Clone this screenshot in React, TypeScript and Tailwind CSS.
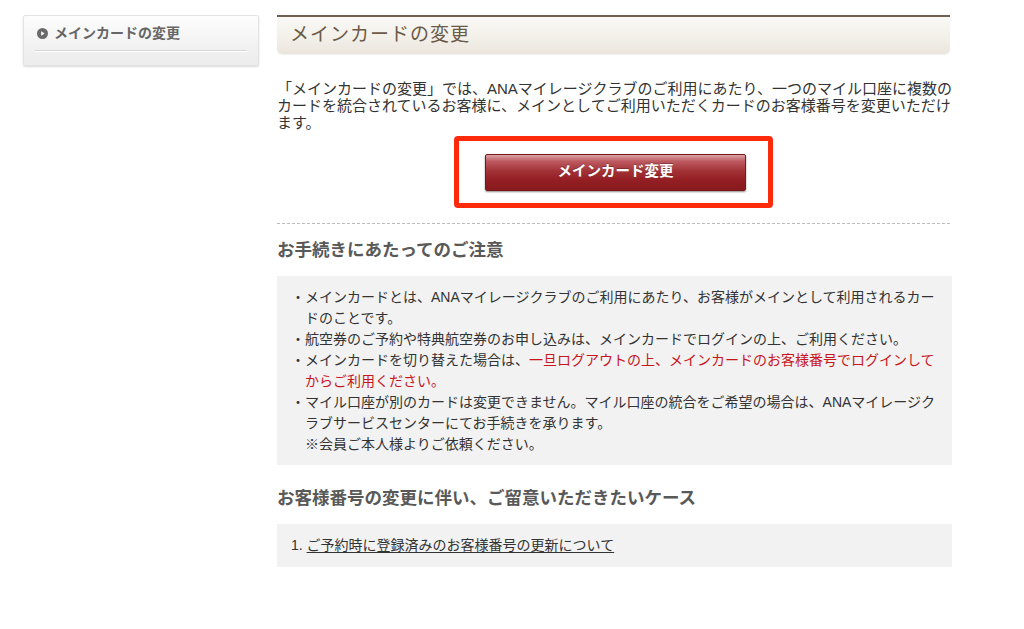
import React from "react";

const sans = { fontFamily: '"Liberation Sans", "Noto Sans CJK JP", sans-serif' };
const serif = { fontFamily: '"Liberation Serif", "Noto Sans CJK JP", serif' };

function Bullet({ children }: { children: React.ReactNode }) {
  return (
    <div className="flex">
      <span className="w-[14px] shrink-0">・</span>
      <div>{children}</div>
    </div>
  );
}

export default function App() {
  return (
    <div className="min-h-[629px] w-[1024px] bg-white text-[#333]" style={sans}>
      <div className="flex pt-[15px]">
        {/* Sidebar */}
        <div className="ml-[23px] w-[236px] shrink-0">
          <div className="h-[51px] rounded-[2px] border border-[#e4e4e4] bg-[linear-gradient(#fdfdfd,#f1f1f1_65%,#ececec)] shadow-[0_1px_2px_rgba(0,0,0,0.15)]">
            <div className="mx-[11px] flex h-[35px] items-center gap-[6px] border-b border-[#d6d6d6] pl-[2px] shadow-[0_1px_0_#fff]">
              <svg width="11" height="11" viewBox="0 0 11 11">
                <circle cx="5.5" cy="5.5" r="5.5" fill="#6a6a6a" />
                <path d="M4.2 3.2 L7.6 5.5 L4.2 7.8 Z" fill="#fff" />
              </svg>
              <span className="text-[14px] font-bold leading-none text-[#666]">メインカードの変更</span>
            </div>
          </div>
        </div>

        {/* Main */}
        <div className="ml-[18px] w-[675px]">
          <div className="w-[673px] overflow-hidden rounded-b-[5px] border-t-2 border-[#6f604f] bg-[linear-gradient(#faf9f5,#f3f0ea_55%,#ebe6dd)] shadow-[0_1px_1px_rgba(0,0,0,0.06)]">
            <div
              className="flex h-[37px] items-center pl-[13px] text-[19px] tracking-[1px] text-[#6b5a47]"
              style={serif}
            >
              メインカードの変更
            </div>
          </div>

          <div className="mt-[26px] w-[680px] text-[15px] leading-[17px] whitespace-nowrap">
            <div>「メインカードの変更」では、ANAマイレージクラブのご利用にあたり、一つのマイル口座に複数の</div>
            <div>カードを統合されているお客様に、メインとしてご利用いただくカードのお客様番号を変更いただけ</div>
            <div>ます。</div>
          </div>

          <div className="mt-[5px] flex w-[673px] justify-center">
            <div className="flex h-[72px] w-[319px] items-center justify-center rounded-[4px] border-[5px] border-[#fd2a0c] pl-[4px]">
              <button className="h-[37px] w-[261px] rounded-[2px] border border-[#7c1717] bg-[linear-gradient(#d9a3a6_0%,#bd5a60_18%,#a33338_45%,#941f24_70%,#861a1d_100%)] text-[14.5px] font-bold text-white shadow-[0_1px_2px_rgba(0,0,0,0.45)] [text-shadow:0_-1px_0_rgba(0,0,0,0.25)]">
                メインカード変更
              </button>
            </div>
          </div>

          <div className="mt-[15px] w-[673px] border-t border-dashed border-[#bdbdbd]" />

          <h2 className="mt-[14px] text-[17.5px] font-bold leading-[24px] text-[#595959]" style={serif}>
            お手続きにあたってのご注意
          </h2>

          <div className="mt-[14px] bg-[#f2f2f2] pt-[11px] pb-[10px] pl-[14px] text-[14px] leading-[21px] whitespace-nowrap">
            <Bullet>
              <div>メインカードとは、ANAマイレージクラブのご利用にあたり、お客様がメインとして利用されるカー</div>
              <div>ドのことです。</div>
            </Bullet>
            <Bullet>
              <div>航空券のご予約や特典航空券のお申し込みは、メインカードでログインの上、ご利用ください。</div>
            </Bullet>
            <Bullet>
              <div>
                メインカードを切り替えた場合は、
                <span className="text-[#c8161d]">一旦ログアウトの上、メインカードのお客様番号でログインして</span>
              </div>
              <div className="text-[#c8161d]">からご利用ください。</div>
            </Bullet>
            <Bullet>
              <div>マイル口座が別のカードは変更できません。マイル口座の統合をご希望の場合は、ANAマイレージク</div>
              <div>ラブサービスセンターにてお手続きを承ります。</div>
              <div>※会員ご本人様よりご依頼ください。</div>
            </Bullet>
          </div>

          <h2 className="mt-[21px] text-[17.5px] font-bold leading-[24px] text-[#595959]" style={serif}>
            お客様番号の変更に伴い、ご留意いただきたいケース
          </h2>

          <div className="mt-[14px] bg-[#f2f2f2] py-[11px] pl-[14px] text-[14px] leading-[21px]">
            <span>1. </span>
            <a href="#" className="text-[#333] underline underline-offset-2">
              ご予約時に登録済みのお客様番号の更新について
            </a>
          </div>
        </div>
      </div>
    </div>
  );
}
